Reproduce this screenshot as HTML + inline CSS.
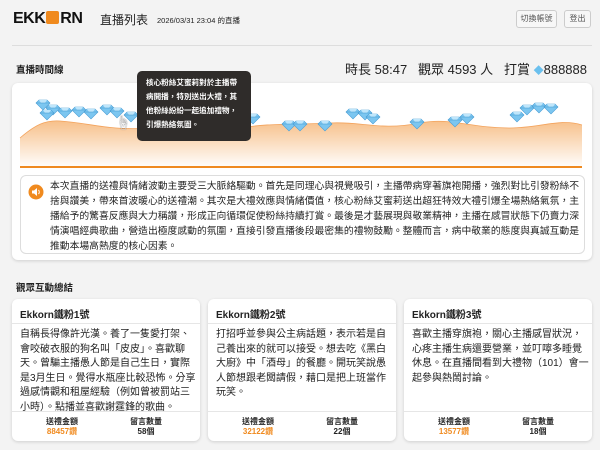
<!DOCTYPE html>
<html><head><meta charset="utf-8">
<style>
*{box-sizing:border-box;margin:0;padding:0}
body{width:600px;height:450px;overflow:hidden;background:#f3f3f3;font-family:"Liberation Sans","Noto Sans CJK TC",sans-serif;color:#222;position:relative}
.abs{position:absolute}
.logo{left:13px;top:10px;font-size:16px;font-weight:900;color:#111;font-family:"Liberation Sans",sans-serif;letter-spacing:-0.5px}
.logo .o{display:inline-block;width:13px;height:13px;background:#f08a1e;border-radius:2px;vertical-align:-1px;margin:0 1px}
.btn{top:10px;height:18px;border:1px solid #ccc;border-radius:3px;background:#f7f7f7;font-size:8px;color:#555;text-align:center;line-height:16px}
.card{background:#fff;border-radius:6px;box-shadow:0 1px 3px rgba(0,0,0,.15)}
.sum{left:20px;top:175px;width:565px;height:79px;border:1px solid #ddd;border-radius:6px;background:#fff}
.sum p{position:absolute;left:29px;top:3px;width:535px;font-size:9.8px;line-height:15px;color:#222;white-space:nowrap}
.fc{top:299px;width:188px;height:142px}
.fc .h{height:25px;border-bottom:1px solid #e6e6e6;font-size:10px;font-weight:bold;padding:7px 0 0 8px}
.fc .b{padding:4px 3px 0 8px;font-size:10px;line-height:14.6px;height:87px;overflow:hidden}
.fc .f{position:absolute;top:112px;left:0;right:0;border-top:1px solid #e6e6e6;height:30px;font-size:8px;text-align:center;font-weight:bold}
.fc .f div{position:absolute;top:5px;width:60px;line-height:10px}
.or{color:#f08a1e}
</style></head><body>
<div class="abs logo">EKK<span class="o"></span>RN</div>
<div class="abs" style="left:100px;top:11px;font-size:12px;">直播列表</div>
<div class="abs" style="left:157px;top:15px;font-size:7.5px;">2026/03/31 23:04 的直播</div>
<div class="abs btn" style="left:516px;width:41px">切換帳號</div>
<div class="abs btn" style="left:564px;width:27px">登出</div>
<div class="abs" style="left:12px;top:45px;width:580px;height:1px;background:#ddd"></div>
<div class="abs" style="left:16px;top:62px;font-size:9.5px;font-weight:bold">直播時間線</div>
<div class="abs" style="right:13px;top:59px;font-size:13px;white-space:nowrap">時長 58:47 &nbsp; 觀眾 4593 人 &nbsp; 打賞 <span style="color:#6ac0ee;font-size:10px">◆</span>888888</div>
<div class="abs card" style="left:12px;top:83px;width:580px;height:177px"></div>
<svg class="abs" style="left:0;top:83px" width="600" height="90">
<defs><linearGradient id="g" x1="0" y1="0" x2="0" y2="1"><stop offset="0" stop-color="#f7c08a"/><stop offset="1" stop-color="#fff"/></linearGradient>
<g id="d"><polygon points="0,3 3,0 11,0 14,3 7,10" fill="#7cc6f0" stroke="#4a9fd6" stroke-width=".6"/><polygon points="3,0 5,3 9,3 11,0" fill="#bfe6fb"/><line x1="0" y1="3" x2="14" y2="3" stroke="#3f94cc" stroke-width=".5"/></g></defs>
<path d="M20,55 C35,42 45,37 60,38 C90,40 110,48 150,45 C180,42 200,52 240,45 C270,40 290,42 330,40 C360,38 380,48 420,40 C450,34 470,45 510,45 C540,45 560,35 582,42 L582,85 L20,85Z" fill="url(#g)"/>
<path d="M20,55 C35,42 45,37 60,38 C90,40 110,48 150,45 C180,42 200,52 240,45 C270,40 290,42 330,40 C360,38 380,48 420,40 C450,34 470,45 510,45 C540,45 560,35 582,42" fill="none" stroke="#f3a35c" stroke-width=".8"/>
<rect x="20" y="83" width="562" height="2" fill="#ef8a20"/>
<g>
<use href="#d" x="36" y="17"/><use href="#d" x="46" y="22"/><use href="#d" x="58" y="25"/><use href="#d" x="72" y="24"/><use href="#d" x="84" y="26"/><use href="#d" x="40" y="27"/><use href="#d" x="100" y="22"/><use href="#d" x="110" y="25"/><use href="#d" x="124" y="29"/>
<use href="#d" x="224" y="28"/><use href="#d" x="246" y="31"/><use href="#d" x="282" y="38"/><use href="#d" x="293" y="38"/><use href="#d" x="318" y="38"/>
<use href="#d" x="346" y="26"/><use href="#d" x="358" y="27"/><use href="#d" x="366" y="31"/><use href="#d" x="410" y="36"/><use href="#d" x="448" y="34"/><use href="#d" x="460" y="31"/><use href="#d" x="520" y="22"/><use href="#d" x="532" y="20"/><use href="#d" x="544" y="21"/><use href="#d" x="510" y="29"/>
</g>
</svg>
<div class="abs" style="left:137px;top:71px;width:114px;height:70px;background:#2f2c2a;border-radius:5px;color:#fff;font-size:7.6px;line-height:14px;padding:5px 10px 0 9px;font-weight:bold">核心粉絲艾蜜莉對於主播帶病開播，特別送出大禮，其他粉絲紛紛一起追加禮物，引爆熱絡氛圍。</div>
<div class="abs" style="left:116px;top:113px;font-size:14px;color:#fff;text-shadow:0 0 1px #000">☝</div>
<div class="abs sum"><svg class="abs" style="left:7px;top:8px" width="16" height="16"><circle cx="8" cy="8" r="7.5" fill="#f08a1e"/><path d="M4,6.5h2l3-2.5v8l-3-2.5h-2z" fill="#fff"/><path d="M10.5,6a3,3 0 0 1 0,4" stroke="#fff" fill="none"/></svg><p>本次直播的送禮與情緒波動主要受三大脈絡驅動。首先是同理心與視覺吸引，主播帶病穿著旗袍開播，強烈對比引發粉絲不<br>捨與讚美，帶來首波暖心的送禮潮。其次是大禮效應與情緒價值，核心粉絲艾蜜莉送出超狂特效大禮引爆全場熱絡氣氛，主<br>播給予的驚喜反應與大力稱讚，形成正向循環促使粉絲持續打賞。最後是才藝展現與敬業精神，主播在感冒狀態下仍賣力深<br>情演唱經典歌曲，營造出極度感動的氛圍，直接引發直播後段最密集的禮物鼓勵。整體而言，病中敬業的態度與真誠互動是<br>推動本場高熱度的核心因素。</p></div>
<div class="abs" style="left:16px;top:280px;font-size:9.5px;font-weight:bold">觀眾互動總結</div>
<div class="abs card fc" style="left:12px"><div class="h">Ekkorn鐵粉1號</div><div class="b">自稱長得像許光漢。養了一隻愛打架、會咬破衣服的狗名叫「皮皮」。喜歡聊天。曾騙主播愚人節是自己生日，實際是3月生日。覺得水瓶座比較恐怖。分享過感情觀和租屋經驗（例如曾被罰站三小時）。點播並喜歡謝霆鋒的歌曲。</div><div class="f"><div style="left:20px">送禮金額<br><span class="or">88457鑽</span></div><div style="left:104px">留言數量<br>58個</div></div></div>
<div class="abs card fc" style="left:208px"><div class="h">Ekkorn鐵粉2號</div><div class="b">打招呼並參與公主病話題，表示若是自己養出來的就可以接受。想去吃《黑白大廚》中「酒母」的餐廳。開玩笑說愚人節想跟老闆請假，藉口是把上班當作玩笑。</div><div class="f"><div style="left:20px">送禮金額<br><span class="or">32122鑽</span></div><div style="left:104px">留言數量<br>22個</div></div></div>
<div class="abs card fc" style="left:404px"><div class="h">Ekkorn鐵粉3號</div><div class="b">喜歡主播穿旗袍，關心主播感冒狀況，心疼主播生病還要營業，並叮嚀多睡覺休息。在直播間看到大禮物（101）會一起參與熱鬧討論。</div><div class="f"><div style="left:20px">送禮金額<br><span class="or">13577鑽</span></div><div style="left:104px">留言數量<br>18個</div></div></div>
</body></html>
